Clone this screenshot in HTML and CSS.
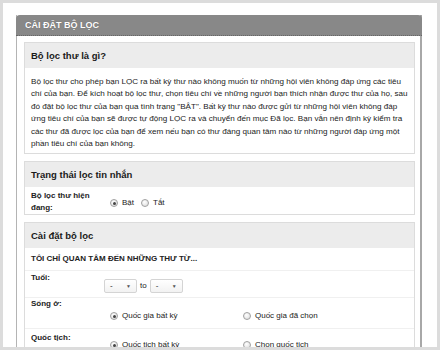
FILE: index.html
```html
<!DOCTYPE html>
<html lang="vi">
<head>
<meta charset="utf-8">
<title>Cài đặt bộ lọc</title>
<link rel="stylesheet" href="styles.css">
</head>
<body>
<div class="frame">
  <div class="panel">
    <div class="panel-head">CÀI ĐẶT BỘ LỌC</div>
    <div class="panel-body">
      <section class="sec">
        <h2 class="sec-head">Bộ lọc thư là gì?</h2>
        <p class="sec-text">Bộ lọc thư cho phép bạn LỌC ra bất kỳ thư nào không muốn từ những hội viên không đáp ứng các tiêu<br>chí của bạn. Để kích hoạt bộ lọc thư, chọn tiêu chí về những người bạn thích nhận được thư của họ, sau<br>đó đặt bộ lọc thư của bạn qua tình trạng "BẬT". Bất kỳ thư nào được gửi từ những hội viên không đáp<br>ứng tiêu chí của bạn sẽ được tự động LỌC ra và chuyển đến mục Đã lọc. Bạn vẫn nên định kỳ kiểm tra<br>các thư đã được lọc của bạn để xem nếu bạn có thư đáng quan tâm nào từ những người đáp ứng một<br>phần tiêu chí của bạn không.</p>
      </section>
      <section class="sec">
        <h2 class="sec-head">Trạng thái lọc tin nhắn</h2>
        <div class="status">
          <div class="status-label">Bộ lọc thư hiện<br>đang:</div>
          <div class="opts">
            <span class="opt"><span class="radio on"></span>Bật</span>
            <span class="opt"><span class="radio"></span>Tắt</span>
          </div>
        </div>
      </section>
      <section class="sec">
        <h2 class="sec-head">Cài đặt bộ lọc</h2>
        <div class="intro">TÔI CHỈ QUAN TÂM ĐẾN NHỮNG THƯ TỪ...</div>
        <div class="row row-age">
          <div class="lbl">Tuổi:</div>
          <div class="val">
            <span class="select">-<span class="arrow">▼</span></span>
            <span class="to">to</span>
            <span class="select">-<span class="arrow">▼</span></span>
          </div>
        </div>
        <div class="row row-live">
          <div class="lbl">Sống ở:</div>
          <div class="val pair">
            <span class="opt"><span class="radio on"></span>Quốc gia bất kỳ</span>
            <span class="opt"><span class="radio"></span>Quốc gia đã chọn</span>
          </div>
        </div>
        <div class="row row-nat">
          <div class="lbl">Quốc tịch:</div>
          <div class="val pair">
            <span class="opt"><span class="radio on"></span>Quốc tịch bất kỳ</span>
            <span class="opt"><span class="radio"></span>Chọn quốc tịch</span>
          </div>
        </div>
      </section>
    </div>
  </div>
</div>
</body>
</html>
```
FILE: styles.css
```css
* { box-sizing: border-box; }
html, body { margin: 0; padding: 0; }
body {
  font-family: "Liberation Sans", Arial, sans-serif;
  color: #222;
  background: #fff;
}
.frame {
  width: 440px;
  height: 350px;
  border: 3px solid #dcdcdc;
  padding: 12px 0 0 13px;
  overflow: hidden;
}
.panel {
  width: 406px;
  border-left: 1px solid #b4b4b4;
  border-right: 2px solid #a8a8a8;
  min-height: 340px;
}
.panel-head {
  margin: 0 -2px 0 -1px;
  height: 21px;
  background: #888;
  border-radius: 4px 4px 0 0;
  border-bottom: 1px dotted #666;
  color: #fff;
  font-weight: bold;
  font-size: 9px;
  line-height: 20px;
  padding-left: 9px;
  text-shadow: 0 0 1px rgba(0,0,0,0.3);
}
.panel-body {
  padding: 6px 5px 0 7px;
  display: flex;
  flex-direction: column;
  gap: 7px;
}
.sec {
  border: 1px solid #dcdcdc;
  margin: 0;
}
.sec-head {
  margin: 0;
  height: 25px;
  background: #ececec;
  font-size: 9.5px;
  font-weight: bold;
  color: #1a1a1a;
  line-height: 25px;
  padding-left: 6px;
}
.sec-text {
  margin: 0;
  padding: 8px 6px 3px 6px;
  font-size: 8.1px;
  line-height: 12.4px;
  white-space: nowrap;
}
.status {
  display: flex;
  padding: 3px 6px 0 6px;
  font-size: 8px;
  line-height: 12px;
}
.status-label {
  width: 79px;
  font-weight: bold;
}
.opts {
  display: flex;
  gap: 7px;
  padding-top: 2px;
}
.opt {
  display: inline-flex;
  align-items: center;
  gap: 2px;
  font-size: 8px;
}
.radio {
  display: inline-block;
  width: 8px;
  height: 8px;
  border-radius: 50%;
  border: 1px solid #a0a0a0;
  background: radial-gradient(circle at 40% 35%, #fff 0, #e4e4e4 70%);
  position: relative;
  margin-right: 2px;
}
.radio.on::after {
  content: "";
  position: absolute;
  left: 1.5px;
  top: 1.5px;
  width: 3px;
  height: 3px;
  border-radius: 50%;
  background: #444;
}
.intro {
  font-size: 8px;
  font-weight: bold;
  padding: 5px 6px 0 6px;
  height: 23px;
  line-height: 12px;
  border-bottom: 1px solid #f0f0f0;
}
.row {
  display: flex;
  border-bottom: 1px solid #f0f0f0;
  font-size: 8px;
  line-height: 12px;
}
.lbl {
  width: 79px;
  padding-left: 6px;
  font-weight: bold;
}
.row-age { height: 27px; padding-top: 1px; }
.row-age .val { display: flex; align-items: center; gap: 3px; margin-top: 2px; }
.select {
  display: inline-flex;
  align-items: center;
  justify-content: space-between;
  width: 33px;
  height: 14px;
  border: 1px solid #d4d4d4;
  border-radius: 2px;
  background: linear-gradient(#fff, #f2f2f2);
  padding: 0 5px;
  font-size: 8px;
}
.arrow { font-size: 5px; color: #555; }
.to { font-size: 8px; }
.row-live { height: 31px; padding-top: 0; }
.row-live .val { padding-top: 6px; }
.row-nat { height: 30px; padding-top: 3px; }
.row-nat .val { padding-top: 0; }
.pair { display: flex; padding-left: 6px; }
.pair .opt { width: 133px; }
```
